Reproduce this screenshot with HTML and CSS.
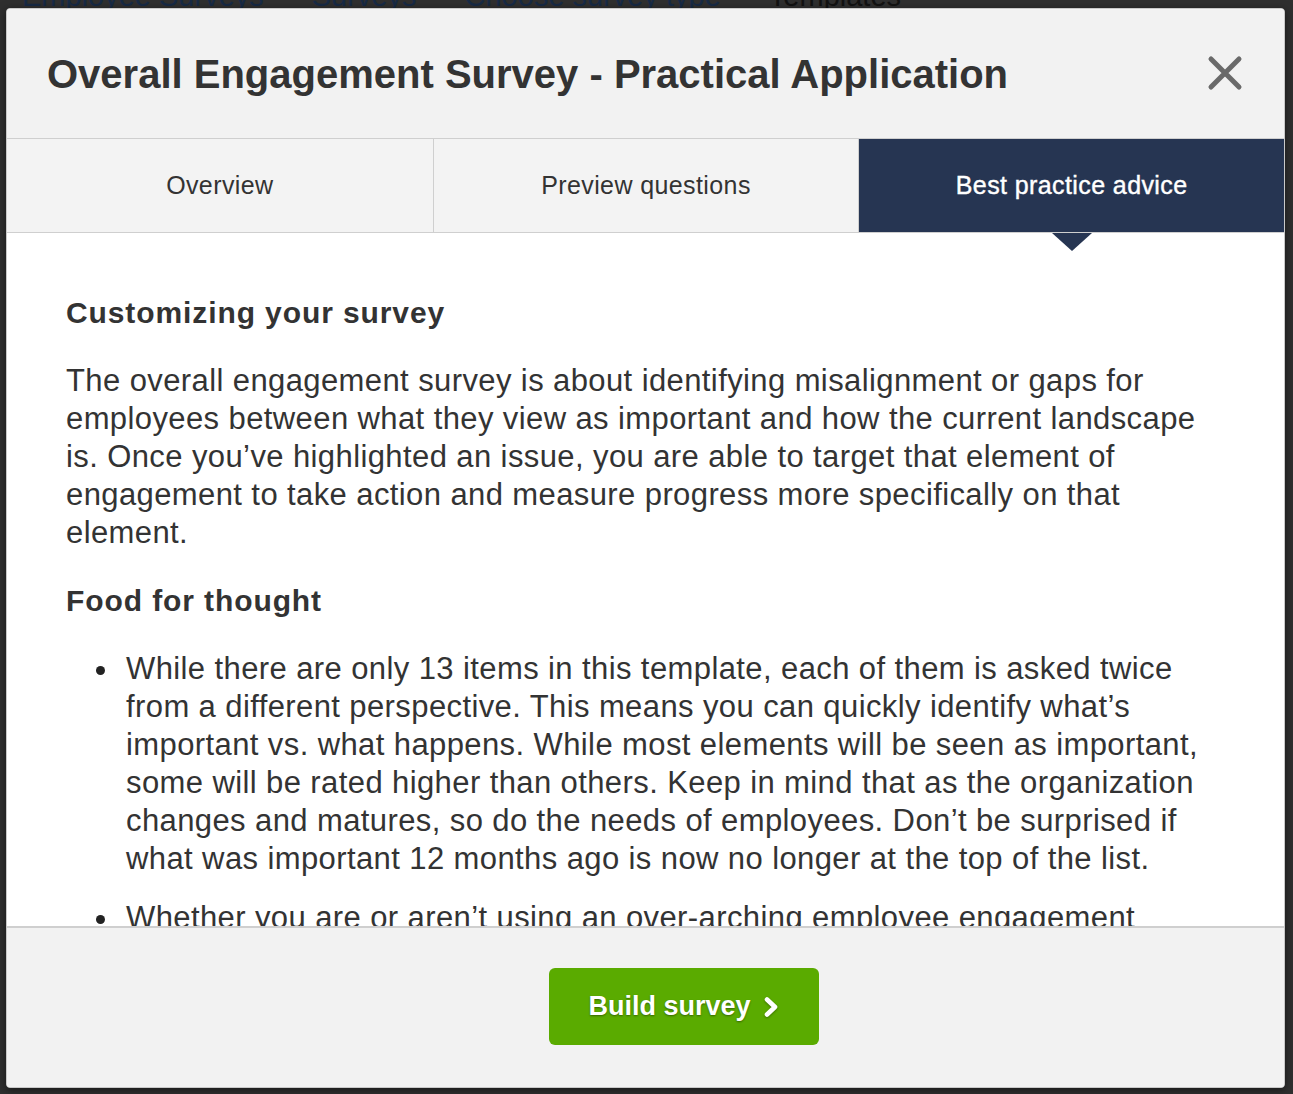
FILE: index.html
```html
<!DOCTYPE html>
<html lang="en">
<head>
<meta charset="utf-8">
<title>Overall Engagement Survey - Practical Application</title>
<link rel="stylesheet" href="styles.css">
</head>
<body>
<div class="page">
  <nav class="crumbs">
    <span class="crumb">Employee Surveys</span>
    <span class="crumb">Surveys</span>
    <span class="crumb">Choose survey type</span>
    <span class="crumb crumb-current">Templates</span>
  </nav>
</div>

<div class="modal" role="dialog" aria-labelledby="modal-title">
  <header class="modal-header">
    <h1 id="modal-title" class="modal-title">Overall Engagement Survey - Practical Application</h1>
    <button class="close-btn" aria-label="Close">
      <svg width="36" height="36" viewBox="0 0 36 36" aria-hidden="true">
        <path d="M4 4 L32 32 M32 4 L4 32" stroke="#6a6a6a" stroke-width="5" stroke-linecap="round" fill="none"/>
      </svg>
    </button>
  </header>

  <div class="tabs">
    <div class="tab">Overview</div>
    <div class="tab">Preview questions</div>
    <div class="tab tab-active">Best practice advice</div>
  </div>

  <div class="modal-body">
    <h2 class="section-title">Customizing your survey</h2>
    <p class="section-text">The overall engagement survey is about identifying misalignment or gaps for employees between what they view as important and how the current landscape is. Once you’ve highlighted an issue, you are able to target that element of engagement to take action and measure progress more specifically on that element.</p>
    <h2 class="section-title">Food for thought</h2>
    <ul class="tips">
      <li class="tip">While there are only 13 items in this template, each of them is asked twice from a different perspective. This means you can quickly identify what’s important vs. what happens. While most elements will be seen as important, some will be rated higher than others. Keep in mind that as the organization changes and matures, so do the needs of employees. Don’t be surprised if what was important 12 months ago is now no longer at the top of the list.</li>
      <li class="tip">Whether you are or aren’t using an over-arching employee engagement framework, this template gives you a quick read on where to focus your efforts first.</li>
    </ul>
  </div>

  <footer class="modal-footer">
    <button class="build-btn">
      <span class="build-label">Build survey</span>
      <svg class="chev" width="16" height="22" viewBox="0 0 16 22" aria-hidden="true">
        <path d="M4 3.5 L12 11 L4 18.5" stroke="#fff" stroke-width="4.6" stroke-linecap="round" stroke-linejoin="round" fill="none"/>
      </svg>
    </button>
  </footer>
</div>
</body>
</html>
```

FILE: styles.css
```css
html, body {
  margin: 0;
  padding: 0;
}

body {
  width: 1293px;
  height: 1094px;
  overflow: hidden;
  position: relative;
  background: #2f2f2f;
  font-family: "Liberation Sans", Arial, Helvetica, sans-serif;
}

.page {
  height: 100%;
}

.crumbs {
  display: flex;
  gap: 48px;
  margin-top: -20px;
  padding-left: 22px;
  font-size: 29px;
  line-height: 32px;
}

.crumb {
  color: #172a45;
}

.crumb-current {
  color: #121212;
}

.modal {
  position: absolute;
  left: 6px;
  top: 8px;
  width: 1277px;
  height: 1078px;
  border: 1px solid #c9c9c9;
  border-radius: 4px;
  background: #ffffff;
  display: flex;
  flex-direction: column;
  overflow: hidden;
  box-shadow: 0 2px 8px rgba(0, 0, 0, 0.5);
}

.modal-header {
  flex: none;
  box-sizing: border-box;
  height: 130px;
  background: #f2f2f2;
  border-bottom: 1px solid #cfcfcf;
  display: flex;
  align-items: center;
  justify-content: space-between;
  padding: 0 41px 0 40px;
}

.modal-title {
  margin: 0;
  font-size: 40px;
  font-weight: bold;
  color: #333333;
  line-height: 48px;
}

.close-btn {
  border: none;
  background: none;
  padding: 0;
  width: 36px;
  height: 36px;
  display: flex;
  align-items: center;
  justify-content: center;
  cursor: pointer;
  margin-top: -2px;
}

.tabs {
  flex: none;
  box-sizing: border-box;
  height: 94px;
  display: grid;
  grid-template-columns: repeat(3, 1fr);
  border-bottom: 1px solid #cfcfcf;
  background: #f3f3f3;
  position: relative;
  z-index: 1;
}

.tab {
  display: flex;
  align-items: center;
  justify-content: center;
  font-size: 25px;
  letter-spacing: 0.4px;
  color: #333333;
  border-left: 1px solid #cfcfcf;
}

.tab:first-child {
  border-left: none;
}

.tab-active {
  position: relative;
  background: #263552;
  color: #ffffff;
  -webkit-text-stroke: 0.4px #ffffff;
}

.tab-active::after {
  content: "";
  position: absolute;
  left: 50%;
  top: calc(100% + 1px);
  transform: translateX(-50%);
  width: 0;
  height: 0;
  border-left: 20px solid transparent;
  border-right: 20px solid transparent;
  border-top: 18px solid #263552;
}

.modal-body {
  flex: 1;
  min-height: 0;
  overflow-y: auto;
  scrollbar-width: none;
  padding: 61px 60px 0 59px;
  color: #333333;
  font-size: 31px;
  line-height: 38px;
  letter-spacing: 0.4px;
}

.section-title {
  margin: 0 0 30px;
  font-size: 30px;
  line-height: 38px;
  font-weight: bold;
  letter-spacing: 0.9px;
}

.section-text {
  margin: 0 0 30px;
}

.tips {
  margin: 0;
  padding-left: 60px;
  list-style: none;
}

.tip {
  margin-bottom: 21px;
}

.tip::before {
  content: "";
  display: inline-block;
  width: 9px;
  height: 9px;
  border-radius: 50%;
  background: #222222;
  margin-left: -30px;
  margin-right: 21px;
  vertical-align: middle;
}

.modal-footer {
  flex: none;
  box-sizing: border-box;
  height: 161px;
  border-top: 2px solid #cfcfcf;
  background: #f2f2f2;
  display: flex;
  align-items: center;
  justify-content: center;
  padding-left: 76px;
}

.build-btn {
  width: 270px;
  height: 77px;
  margin-top: -2px;
  border: none;
  border-radius: 6px;
  background: #5aab00;
  color: #ffffff;
  font-family: "Liberation Sans", Arial, Helvetica, sans-serif;
  font-size: 27px;
  font-weight: bold;
  display: inline-flex;
  align-items: center;
  justify-content: center;
  gap: 12px;
  cursor: pointer;
  padding: 0;
}

.build-label {
  text-shadow: 0 1px 2px rgba(0, 0, 0, 0.4);
}

.chev {
  flex: none;
  filter: drop-shadow(0 1px 1px rgba(0, 0, 0, 0.35));
  margin-top: 1px;
}
```
